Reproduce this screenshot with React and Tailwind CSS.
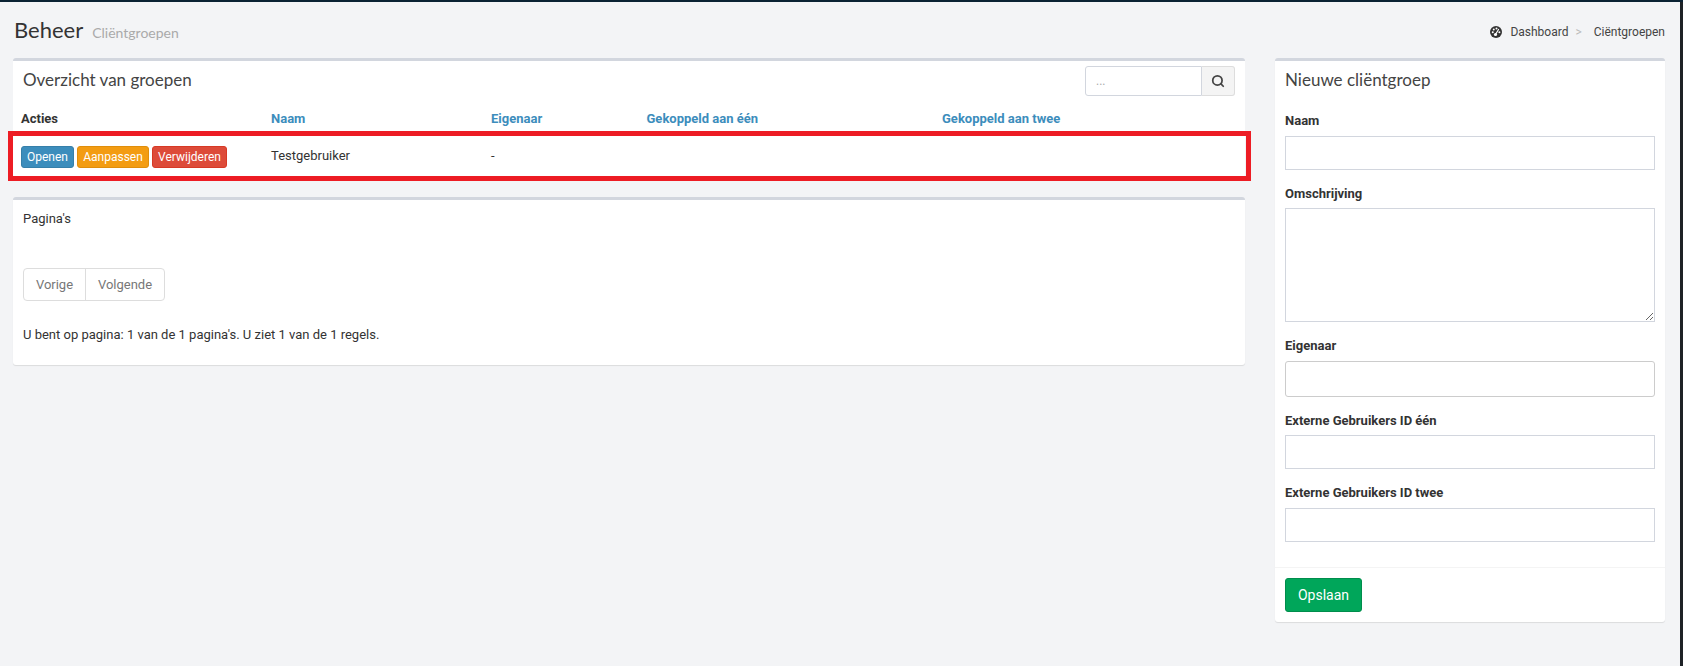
import React from "react";
import { Search } from "lucide-react";

function Gauge() {
  return (
    <svg viewBox="0 0 24 24" className="mr-[7px] h-[12px] w-[12px]">
      <circle cx="12" cy="12" r="12" fill="#333" />
      <g fill="#fff">
        <circle cx="5.5" cy="12.5" r="2" />
        <circle cx="7.5" cy="7" r="2" />
        <circle cx="13" cy="4.8" r="2" />
        <circle cx="18.8" cy="12.5" r="2" />
      </g>
      <path d="M11 17 L17 7" stroke="#fff" strokeWidth="2.4" strokeLinecap="round" />
      <circle cx="11" cy="17" r="3.2" fill="#fff" />
    </svg>
  );
}

function Field({ label, mt, gap, children }) {
  return (
    <div className={mt}>
      <div className={`h-5 text-[13px] leading-5 font-bold text-[#333] ${gap}`}>{label}</div>
      {children}
    </div>
  );
}

export default function App() {
  return (
    <div className="relative min-h-[666px] w-[1683px] overflow-hidden border-t-2 border-[#0a2233] bg-[#f3f4f6] font-['Roboto','Liberation_Sans',sans-serif] text-[13px] text-[#333]">
      <div className="flex w-[1680px] flex-col">
        <div className="flex h-[56px] items-start justify-between pr-[15px] pl-[14px]">
          <div className="mt-[10px] flex items-baseline gap-[9px]">
            <span className="font-['Lato',sans-serif] text-[22px] leading-9 text-[#333]">Beheer</span>
            <span className="font-['Lato',sans-serif] text-[14px] text-[#aaa]">Cliëntgroepen</span>
          </div>
          <div className="mt-[23px] flex h-[14px] items-center text-[12px] leading-none text-[#444]">
            <Gauge />
            <span className="ml-[1px]">Dashboard</span>
            <span className="mr-[12px] ml-[7px] text-[#bbb]">&gt;</span>
            <span>Ciëntgroepen</span>
          </div>
        </div>

        <div className="flex items-start pl-[13px]">
          <div className="w-[1232px]">
            <div className="h-[119px] rounded-[3px] border-t-[3px] border-[#d2d6de] bg-white">
              <div className="flex h-[44px] items-start justify-between px-[10px]">
                <div className="mt-[7px] font-['Lato',sans-serif] text-[17px] leading-6 text-[#444]">Overzicht van groepen</div>
                <div className="mt-[5px] flex h-[30px] w-[150px]">
                  <div className="flex w-[117px] items-center rounded-l-[3px] border border-[#d2d6de] pl-[10px] text-[12px] text-[#aaa]">...</div>
                  <div className="flex flex-1 items-center justify-center rounded-r-[3px] border border-l-0 border-[#ddd] bg-[#f4f4f4]">
                    <Search className="h-[14px] w-[14px] text-[#444]" strokeWidth={3} />
                  </div>
                </div>
              </div>
              <div className="grid h-[27px] grid-cols-[250px_220px_155.5px_295.5px_1fr] items-center pl-2 text-[13px] font-bold text-[#3c8dbc]">
                <span className="text-[#333]">Acties</span>
                <span>Naam</span>
                <span>Eigenaar</span>
                <span>Gekoppeld aan één</span>
                <span>Gekoppeld aan twee</span>
              </div>
              <div className="relative grid h-[45px] grid-cols-[250px_220px_1fr] items-center border-t-2 border-[#f4f4f4] pl-2">
                <div className="mt-[3px] flex gap-[3px] text-[12px]">
                  <span className="flex h-[22px] w-[53px] items-center justify-center rounded-[3px] border border-[#367fa9] bg-[#3c8dbc] text-white">Openen</span>
                  <span className="flex h-[22px] w-[72px] items-center justify-center rounded-[3px] border border-[#e08e0b] bg-[#f39c12] text-white">Aanpassen</span>
                  <span className="flex h-[22px] w-[75px] items-center justify-center rounded-[3px] border border-[#d73925] bg-[#dd4b39] text-white">Verwijderen</span>
                </div>
                <span>Testgebruiker</span>
                <span>-</span>
                <div className="absolute top-[-3px] left-[-5px] h-[50px] w-[1243px] border-[5px] border-[#ed1c24]" />
              </div>
            </div>

            <div className="mt-[20px] h-[168px] rounded-[3px] border-t-[3px] border-[#d2d6de] bg-white pt-[10px] pl-[10px] shadow-[0_1px_1px_rgba(0,0,0,0.1)]">
              <div className="h-[18px] leading-[18px]">Pagina's</div>
              <div className="mt-[40px] flex h-[33px] w-[142px] rounded-[4px] border border-[#ddd] text-[#777]">
                <span className="flex w-[62px] items-center justify-center border-r border-[#ddd]">Vorige</span>
                <span className="flex flex-1 items-center justify-center">Volgende</span>
              </div>
              <div className="mt-[25px] leading-[18px]">U bent op pagina: 1 van de 1 pagina's. U ziet 1 van de 1 regels.</div>
            </div>
          </div>

          <div className="ml-[30px] h-[564px] w-[390px] rounded-[3px] border-t-[3px] border-[#d2d6de] bg-white shadow-[0_1px_1px_rgba(0,0,0,0.1)]">
            <div className="mt-[7px] pl-[10px] font-['Lato',sans-serif] text-[17px] leading-6 text-[#444]">Nieuwe cliëntgroep</div>
            <div className="px-[10px]">
              <Field label="Naam" mt="mt-[19px]" gap="mb-[5px]">
                <input className="block h-[34px] w-full border border-[#d2d6de] bg-white outline-none" />
              </Field>
              <Field label="Omschrijving" mt="mt-[14px]" gap="mb-[4px]">
                <textarea className="block h-[114px] w-full border border-[#d2d6de] bg-white outline-none" />
              </Field>
              <Field label="Eigenaar" mt="mt-[14px]" gap="mb-[5px]">
                <input className="block h-[36px] w-full rounded-[3px] border border-[#ccc] bg-white outline-none" />
              </Field>
              <Field label="Externe Gebruikers ID één" mt="mt-[14px]" gap="mb-[4px]">
                <input className="block h-[34px] w-full border border-[#d2d6de] bg-white outline-none" />
              </Field>
              <Field label="Externe Gebruikers ID twee" mt="mt-[14px]" gap="mb-[5px]">
                <input className="block h-[34px] w-full border border-[#d2d6de] bg-white outline-none" />
              </Field>
            </div>
            <div className="mt-[25px] border-t border-[#f4f4f4] px-[10px] pt-[10px]">
              <div className="flex h-[34px] w-[77px] items-center justify-center rounded-[3px] border border-[#008d4c] bg-[#00a65a] text-[14px] text-white">Opslaan</div>
            </div>
          </div>
        </div>
      </div>
      <div className="absolute top-0 right-0 h-full w-[3px] bg-[#1e2226]" />
    </div>
  );
}
